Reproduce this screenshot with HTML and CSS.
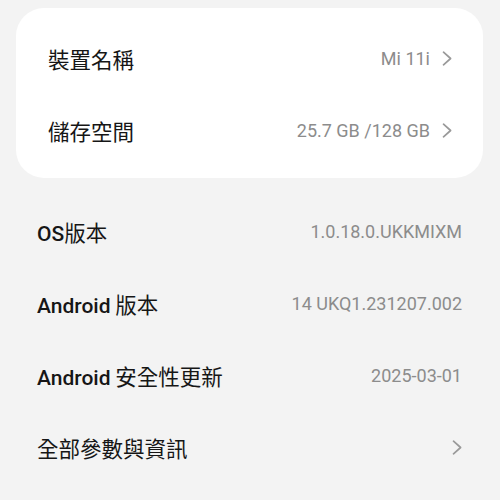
FILE: index.html
```html
<!DOCTYPE html>
<html lang="zh-Hant">
<head>
<meta charset="utf-8">
<link rel="stylesheet" href="styles.css">
</head>
<body>
<div class="page">
  <section class="card">
    <div class="row">
      <span class="label">裝置名稱</span>
      <span class="value">Mi 11i</span>
      <svg class="chev" viewBox="0 0 10 15" width="10" height="15"><path d="M1.5 1.2 L8.6 7.5 L1.5 13.8" fill="none" stroke="#999999" stroke-width="1.7" stroke-linecap="round" stroke-linejoin="round"/></svg>
    </div>
    <div class="row">
      <span class="label">儲存空間</span>
      <span class="value">25.7 GB /128 GB</span>
      <svg class="chev" viewBox="0 0 10 15" width="10" height="15"><path d="M1.5 1.2 L8.6 7.5 L1.5 13.8" fill="none" stroke="#999999" stroke-width="1.7" stroke-linecap="round" stroke-linejoin="round"/></svg>
    </div>
  </section>
  <section class="list">
    <div class="row">
      <span class="label"><b class="lat">OS</b>版本</span>
      <span class="value">1.0.18.0.UKKMIXM</span>
    </div>
    <div class="row">
      <span class="label"><b class="lat">Android</b> 版本</span>
      <span class="value">14 UKQ1.231207.002</span>
    </div>
    <div class="row">
      <span class="label"><b class="lat">Android</b> 安全性更新</span>
      <span class="value">2025-03-01</span>
    </div>
    <div class="row">
      <span class="label">全部參數與資訊</span>
      <svg class="chev" viewBox="0 0 10 15" width="10" height="15"><path d="M1.5 1.2 L8.6 7.5 L1.5 13.8" fill="none" stroke="#999999" stroke-width="1.7" stroke-linecap="round" stroke-linejoin="round"/></svg>
    </div>
  </section>
</div>
</body>
</html>
```

FILE: styles.css
```css
html, body {
  margin: 0;
  padding: 0;
  background: #f3f3f3;
}
body {
  font-family: Roboto, "Noto Sans CJK TC", sans-serif;
  color: #161616;
  width: 500px;
  height: 500px;
  overflow: hidden;
}
.page {
  display: flex;
  flex-direction: column;
  padding-top: 8px;
}
.card {
  margin: 0 17px 0 16px;
  background: #ffffff;
  border-radius: 28px;
  padding: 14px 31px 12px 32px;
  display: flex;
  flex-direction: column;
}
.list {
  margin-top: 17px;
  padding: 0 38px 0 37px;
  display: flex;
  flex-direction: column;
}
.row {
  height: 72px;
  display: flex;
  align-items: center;
}
.label {
  flex: 1;
  font-size: 21.5px;
  font-family: "Noto Sans CJK TC", sans-serif;
  font-weight: 400;
  color: #161616;
  white-space: nowrap;
}
.lat {
  font-family: Roboto, "Noto Sans", sans-serif;
  font-size: 21px;
  font-weight: 500;
}
.value {
  font-size: 18px;
  color: #8c8c8c;
  white-space: nowrap;
}
.value + .chev {
  margin-left: 12px;
}
.chev {
  display: block;
  flex: none;
}
```
